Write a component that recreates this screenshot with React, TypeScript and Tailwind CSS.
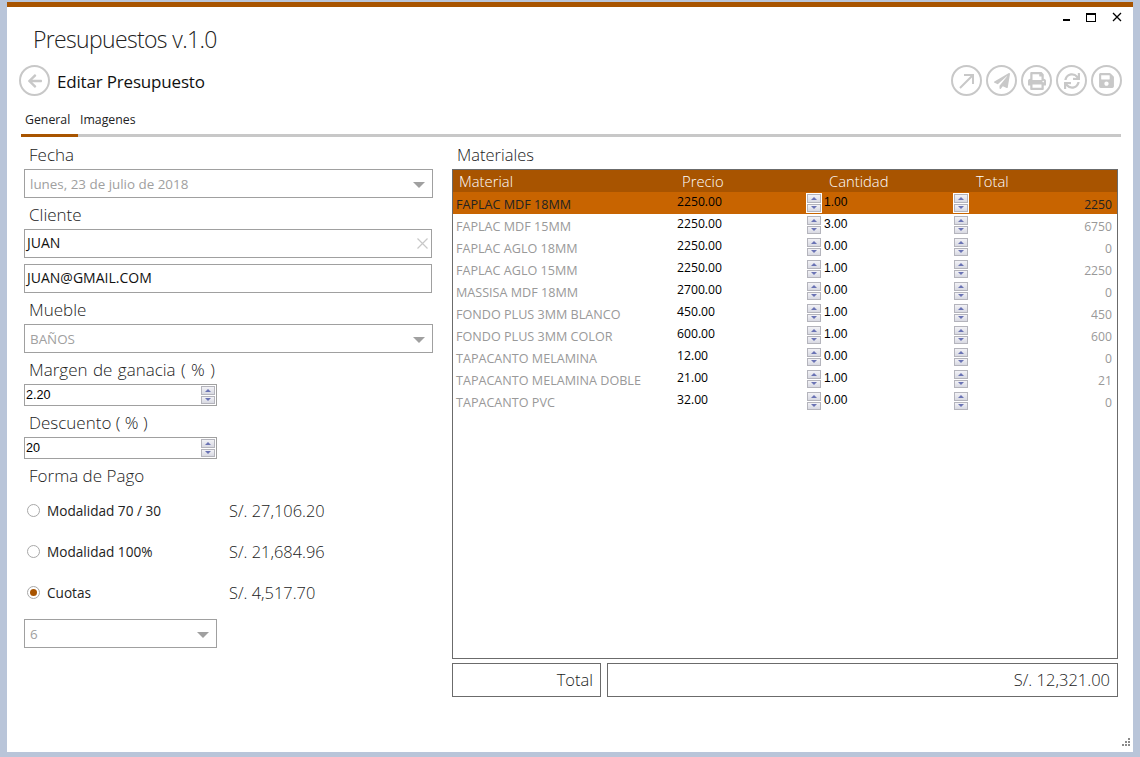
import { FaArrowLeft, FaPaperPlane, FaPrint, FaSave, FaSync } from "react-icons/fa";
import type { ReactNode } from "react";

const materials = [
  { name: "FAPLAC MDF 18MM", price: "2250.00", qty: "1.00", total: "2250" },
  { name: "FAPLAC MDF 15MM", price: "2250.00", qty: "3.00", total: "6750" },
  { name: "FAPLAC AGLO 18MM", price: "2250.00", qty: "0.00", total: "0" },
  { name: "FAPLAC AGLO 15MM", price: "2250.00", qty: "1.00", total: "2250" },
  { name: "MASSISA MDF 18MM", price: "2700.00", qty: "0.00", total: "0" },
  { name: "FONDO PLUS 3MM BLANCO", price: "450.00", qty: "1.00", total: "450" },
  { name: "FONDO PLUS 3MM COLOR", price: "600.00", qty: "1.00", total: "600" },
  { name: "TAPACANTO MELAMINA", price: "12.00", qty: "0.00", total: "0" },
  { name: "TAPACANTO MELAMINA DOBLE", price: "21.00", qty: "1.00", total: "21" },
  { name: "TAPACANTO PVC", price: "32.00", qty: "0.00", total: "0" },
];

function Label({ children }: { children: ReactNode }) {
  return (
    <div className="h-[31px] flex items-center pl-[5px] pt-[2px] text-[17px] font-light text-[#222]">
      {children}
    </div>
  );
}

function Combo({ value, className }: { value: string; className?: string }) {
  return (
    <div
      className={`h-[29px] border border-[#a0a0a0] flex items-center justify-between pl-[5px] pr-[7px] pt-[2px] text-[13.4px] text-[#a0a0a0] ${className}`}
    >
      <span>{value}</span>
      <div className="w-0 h-0 border-l-[6px] border-r-[6px] border-t-[6px] border-l-transparent border-r-transparent border-t-[#a0a0a0]" />
    </div>
  );
}

function TextBox({ value, action }: { value: string; action?: ReactNode }) {
  return (
    <div className="h-[29px] w-[408px] border border-[#a0a0a0] flex items-center justify-between pl-[2px] pr-[3px] text-[14px] text-[#111]">
      <span className="pb-[3px]">{value}</span>
      {action}
    </div>
  );
}

function Spinner({ light }: { light?: boolean }) {
  return (
    <div
      className={`w-[16px] h-[20px] border flex flex-col gap-[1px] ${light ? "border-white bg-white" : "border-transparent"}`}
    >
      <div className="flex-1 bg-gradient-to-b from-[#f2f2f6] to-[#d8d9e2] border border-[#b4b4bc] flex items-center justify-center">
        <div className="w-0 h-0 border-l-[3px] border-r-[3px] border-b-[3px] border-l-transparent border-r-transparent border-b-[#6a73b4]" />
      </div>
      <div className="flex-1 bg-gradient-to-b from-[#f2f2f6] to-[#d8d9e2] border border-[#b4b4bc] flex items-center justify-center">
        <div className="w-0 h-0 border-l-[3px] border-r-[3px] border-t-[3px] border-l-transparent border-r-transparent border-t-[#6a73b4]" />
      </div>
    </div>
  );
}

function NumberBox({ value }: { value: string }) {
  return (
    <div className="h-[22px] w-[193px] border border-[#a0a0a0] flex items-center justify-between pl-[1px] text-[12.6px] text-black font-['Liberation_Sans',sans-serif]">
      <span>{value}</span>
      <Spinner />
    </div>
  );
}

function Radio({ label, amount, checked }: { label: string; amount: string; checked?: boolean }) {
  return (
    <div className="h-[41px] flex items-center pl-[3px]">
      <div className="w-[13px] h-[13px] rounded-full border border-[#a8a8a8] flex items-center justify-center">
        {checked && <div className="w-[7px] h-[7px] rounded-full bg-[#a85400]" />}
      </div>
      <span className="ml-[7px] pt-[2px] w-[182px] text-[13.6px] text-[#222]">{label}</span>
      <span className="pt-[2px] text-[16.4px] font-light text-[#222]">{amount}</span>
    </div>
  );
}

function RoundButton({ children }: { children: ReactNode }) {
  return (
    <div className="w-[31px] h-[31px] rounded-full border-[2px] border-[#c8c8c8] flex items-center justify-center text-[#c8c8c8]">
      {children}
    </div>
  );
}

function App() {
  return (
    <div
      className="w-[1140px] h-[757px] bg-[#b9c5d9] pt-[2px] px-[7px] pb-[5px]"
      style={{ fontFamily: '"Open Sans", sans-serif' }}
    >
      <div className="h-full bg-white flex flex-col relative">
        <div className="h-[5px] bg-[#a85400]" />

        <div className="h-[14px] flex justify-end items-center gap-[16px] pr-[11px] mt-[3px]">
          <div className="w-[7px] h-[2px] bg-black mt-[5px]" />
          <div className="w-[10px] h-[9px] border border-black border-t-2" />
          <svg width="10" height="10" viewBox="0 0 10 10">
            <path d="M1 1 L9 9 M9 1 L1 9" stroke="#000" strokeWidth="1.3" fill="none" />
          </svg>
        </div>

        <div className="pl-[26px] h-[30px] flex items-center text-[23px] tracking-[-0.66px] font-light text-[#222]">
          Presupuestos v.1.0
        </div>

        <div className="h-[31px] mt-[11px] flex items-center pl-[12px] pr-[11px]">
          <RoundButton>
            <FaArrowLeft size={16} />
          </RoundButton>
          <span className="ml-[7px] pt-[2px] text-[17px] tracking-[-0.18px] text-[#111] flex-1">Editar Presupuesto</span>
          <div className="flex gap-[4px]">
            <RoundButton>
              <svg width="16" height="16" viewBox="0 0 16 16">
                <path d="M1 15 L14 2 M5 2 H14 V11" stroke="#c8c8c8" strokeWidth="2" fill="none" />
              </svg>
            </RoundButton>
            <RoundButton>
              <FaPaperPlane size={16} />
            </RoundButton>
            <RoundButton>
              <FaPrint size={18} />
            </RoundButton>
            <RoundButton>
              <FaSync size={16} />
            </RoundButton>
            <RoundButton>
              <FaSave size={17} />
            </RoundButton>
          </div>
        </div>

        <div className="mt-[12px] ml-[14px] mr-[12px] h-[29px] border-b-[3px] border-[#c8c8c8] flex text-[12.3px] text-[#222]">
          <div className="w-[57px] h-[29px] border-b-[3px] border-[#a85400] pl-[4px] pt-[3px]">General</div>
          <div className="pl-[2px] pt-[3px]">Imagenes</div>
        </div>

        <div className="flex flex-1 pt-[1px]">
          <div className="w-[445px] pl-[17px] pr-[19px]">
            <Label>Fecha</Label>
            <Combo value="lunes, 23 de julio de 2018" />
            <Label>Cliente</Label>
            <TextBox
              value="JUAN"
              action={
                <svg width="11" height="11" viewBox="0 0 11 11">
                  <path d="M0.5 0.5 L10.5 10.5 M10.5 0.5 L0.5 10.5" stroke="#c8c8c8" strokeWidth="1.2" fill="none" />
                </svg>
              }
            />
            <div className="h-[6px]" />
            <TextBox value="JUAN@GMAIL.COM" />
            <Label>Mueble</Label>
            <Combo value="BAÑOS" />
            <Label>
              <span className="[word-spacing:1px]">Margen de ganacia ( % )</span>
            </Label>
            <NumberBox value="2.20" />
            <Label>Descuento ( % )</Label>
            <NumberBox value="20" />
            <Label>Forma de Pago</Label>
            <Radio label="Modalidad 70 / 30" amount="S/. 27,106.20" />
            <Radio label="Modalidad 100%" amount="S/. 21,684.96" />
            <Radio label="Cuotas" amount="S/. 4,517.70" checked />
            <Combo value="6" className="w-[193px] mt-[6px]" />
          </div>

          <div className="w-[666px]">
            <div className="h-[31px] flex items-center pl-[5px] pt-[3px] text-[16.5px] font-light text-[#222]">Materiales</div>
            <div className="h-[490px] border border-[#6b6b6b]">
              <div className="h-[22px] bg-[#a85400] flex items-center text-[14.8px] font-light text-white">
                <div className="w-[229px] pl-[6px]">Material</div>
                <div className="w-[147px]">Precio</div>
                <div className="w-[147px]">Cantidad</div>
                <div>Total</div>
              </div>
              {materials.map((m, i) => (
                <div key={m.name} className={`h-[22px] flex text-[12.2px] ${i === 0 ? "bg-[#c86400]" : ""}`}>
                  <div className={`w-[224px] pl-[3px] pt-[4px] text-[12.6px] ${i === 0 ? "text-[#222]" : "text-[#999]"}`}>{m.name}</div>
                  <div className="w-[129px] pt-[1px] text-black">{m.price}</div>
                  <div className="w-[18px] pt-[1px]">
                    <Spinner light={i === 0} />
                  </div>
                  <div className="w-[129px] pt-[1px] text-[12px] text-black font-['Liberation_Sans',sans-serif]">{m.qty}</div>
                  <div className="w-[18px] pt-[1px]">
                    <Spinner light={i === 0} />
                  </div>
                  <div className={`flex-1 text-right pr-[5px] pt-[4px] ${i === 0 ? "text-[#222]" : "text-[#999]"}`}>{m.total}</div>
                </div>
              ))}
            </div>
            <div className="flex mt-[4px] gap-[6px]">
              <div className="w-[149px] h-[34px] border border-[#6b6b6b] flex items-center justify-end pr-[7px] text-[16.5px] font-light text-[#222]">
                Total
              </div>
              <div className="flex-1 h-[34px] border border-[#6b6b6b] flex items-center justify-end pr-[7px] text-[16.5px] font-light text-[#222]">
                S/. 12,321.00
              </div>
            </div>
          </div>
        </div>

        <svg className="absolute right-[2px] bottom-[5px]" width="10" height="10" viewBox="0 0 10 10" fill="#8a8a8a">
          <rect x="7" y="1" width="2" height="2" />
          <rect x="4" y="4" width="2" height="2" />
          <rect x="7" y="4" width="2" height="2" />
          <rect x="1" y="7" width="2" height="2" />
          <rect x="4" y="7" width="2" height="2" />
          <rect x="7" y="7" width="2" height="2" />
        </svg>
      </div>
    </div>
  );
}

export default App;
